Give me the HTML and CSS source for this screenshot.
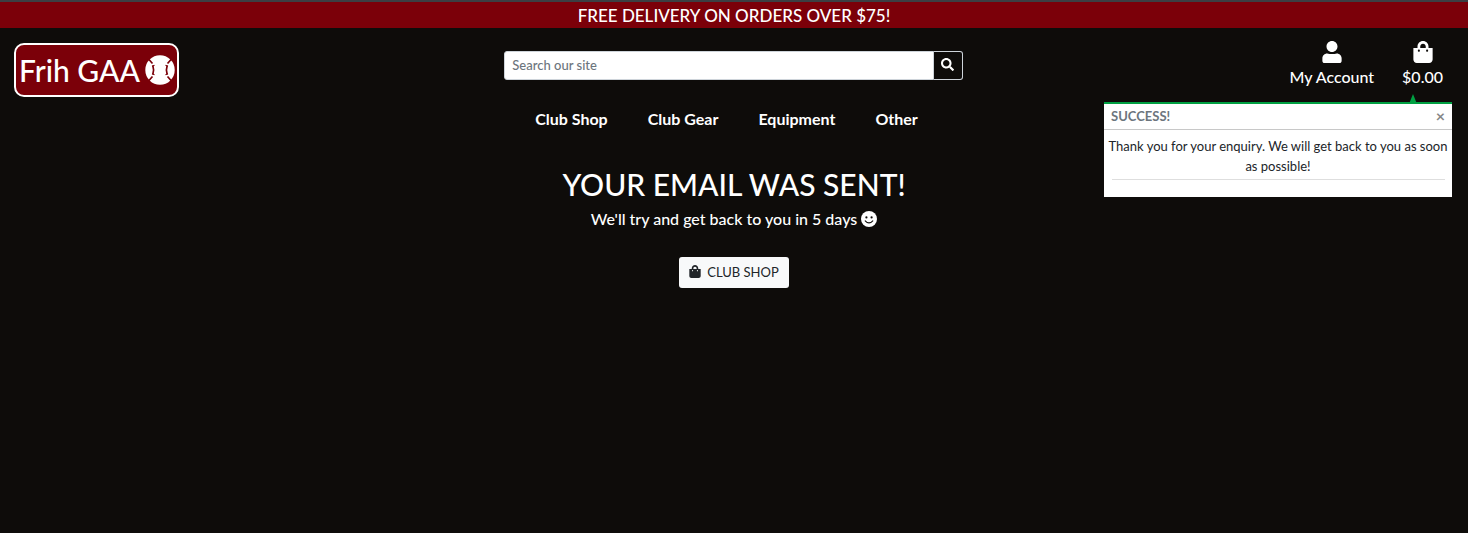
FILE: index.html
```html
<!DOCTYPE html>
<html lang="en">
<head>
<meta charset="utf-8">
<meta name="viewport" content="width=device-width, initial-scale=1">
<title>Frih GAA</title>
<link rel="stylesheet" href="styles.css">
</head>
<body>
<svg class="sprite" aria-hidden="true">
  <symbol id="bag" viewBox="0 0 448 512"><path d="M352 160v-32C352 57.42 294.579 0 224 0 153.42 0 96 57.42 96 128v32H0v272c0 44.183 35.817 80 80 80h288c44.183 0 80-35.817 80-80V160h-96zm-192-32c0-35.29 28.71-64 64-64s64 28.71 64 64v32H160v-32zm160 120c-13.255 0-24-10.745-24-24s10.745-24 24-24 24 10.745 24 24-10.745 24-24 24zm-192 0c-13.255 0-24-10.745-24-24s10.745-24 24-24 24 10.745 24 24-10.745 24-24 24z"/></symbol>
</svg>
<div class="banner">FREE DELIVERY ON ORDERS OVER $75!</div>
<header class="header">
  <div class="brand">
    <a class="logo" href="#">Frih GAA
      <svg class="ball" viewBox="0 0 30 30" aria-hidden="true">
        <circle cx="15" cy="15" r="14.7" fill="#fff"/>
        <g fill="none" stroke="#7b0009" stroke-width="1.700">
          <path d="M3.500 4L7.500 8.500M3.500 26L7.500 21.500M26.500 4L22.500 8.500M26.500 26L22.500 21.500"/>
          <path d="M7.800 10.500Q9.400 15 7.800 19.500M22.200 10.500Q20.600 15 22.200 19.500"/>
          <path d="M7 11.300L9.500 10.300M7 18.700L9.500 19.700M23 11.300L20.500 10.300M23 18.700L20.500 19.700" stroke-width="1.200"/>
        </g>
      </svg>
    </a>
  </div>
  <form class="search">
    <input class="search-input" type="text" placeholder="Search our site" aria-label="Search our site">
    <button class="search-button" type="button" aria-label="Search">
      <svg class="search-icon" viewBox="0 0 512 512" aria-hidden="true"><path d="M505 442.700L405.300 343c-4.500-4.500-10.600-7-17-7H372c27.600-35.300 44-79.700 44-128C416 93.100 322.900 0 208 0S0 93.100 0 208s93.100 208 208 208c48.300 0 92.700-16.400 128-44v16.300c0 6.400 2.500 12.500 7 17l99.700 99.700c9.400 9.400 24.600 9.400 33.900 0l28.300-28.300c9.400-9.400 9.400-24.600.1-34zM208 336c-70.700 0-128-57.200-128-128 0-70.700 57.200-128 128-128 70.700 0 128 57.200 128 128 0 70.700-57.200 128-128 128z"/></svg>
    </button>
  </form>
  <div class="account">
    <a class="account-link" href="#">
      <svg class="account-icon" viewBox="0 0 448 512" aria-hidden="true"><path d="M224 256c70.700 0 128-57.300 128-128S294.700 0 224 0 96 57.300 96 128s57.300 128 128 128zm112 32c-34 10-70 16-112 16s-78-6-112-16C50 288 0 338 0 400V464c0 26.500 21.500 48 48 48h352c26.500 0 48-21.500 48-48v-64c0-62-50-112-112-112z"/></svg>
      <span>My Account</span>
    </a>
    <a class="account-link" href="#">
      <svg class="account-icon" aria-hidden="true"><use href="#bag"/></svg>
      <span>$0.00</span>
    </a>
  </div>
  <section class="toast" role="status">
    <div class="toast-header">
      <strong>SUCCESS!</strong>
      <button class="toast-close" type="button" aria-label="Close">×</button>
    </div>
    <div class="toast-body">
      <p class="toast-text">Thank you for your enquiry. We will get back to you as soon as possible!</p>
      <hr class="toast-rule">
    </div>
  </section>
</header>
<nav class="nav">
  <a href="#">Club Shop</a>
  <a href="#">Club Gear</a>
  <a href="#">Equipment</a>
  <a href="#">Other</a>
</nav>
<main class="main">
  <h1 class="title">YOUR EMAIL WAS SENT!</h1>
  <p class="lead">We'll try and get back to you in 5 days
    <svg class="smile" viewBox="0 0 16 16" aria-hidden="true">
      <circle cx="8" cy="8" r="8" fill="#fff"/>
      <circle cx="5.400" cy="6.400" r="1.100" fill="#0e0c0a"/><circle cx="10.600" cy="6.400" r="1.100" fill="#0e0c0a"/>
      <path d="M4.200 9.800Q8 14 11.800 9.800" fill="none" stroke="#0e0c0a" stroke-width="1.100" stroke-linecap="round"/>
    </svg>
  </p>
  <a class="shop-button" href="#"><svg class="shop-icon" aria-hidden="true"><use href="#bag"/></svg>CLUB SHOP</a>
</main>
</body>
</html>
```
FILE: styles.css
```css
* { box-sizing: border-box; }
body {
  margin: 0;
  background: #0e0c0a;
  color: #fff;
  font-family: Lato, sans-serif;
  font-size: 16px;
  font-weight: 500;
  line-height: 24px;
}
a { color: inherit; text-decoration: none; }
svg { fill: currentColor; }
.sprite { display: none; }
.banner {
  padding-top: 2px;
  border-top: 2px solid #3c3f43;
  background: #7b0009;
  font-size: 17px;
  text-align: center;
}
.header {
  position: relative;
  display: grid;
  grid-template-columns: repeat(3, 1fr);
  align-items: start;
  padding-top: 12px;
}
.brand { padding: 3px 14px 0; }
.logo {
  display: inline-flex;
  align-items: center;
  gap: 5px;
  height: 54px;
  padding: 0 2px 0 3px;
  border: 2px solid #fff;
  border-radius: 10px;
  background: #7b0009;
  font-size: 30px;
  white-space: nowrap;
}
.ball { width: 30px; height: 30px; }
.search { display: flex; padding: 11px 16px 0 15px; }
.search-input {
  flex: 1;
  min-width: 0;
  height: 29px;
  padding: 0 7px 2px;
  border: 1px solid #ced4da;
  border-radius: 3px 0 0 3px;
  background: #fff;
  font: 500 13px/20px Lato, sans-serif;
}
.search-input::placeholder { color: #6c757d; }
.search-button {
  width: 29px;
  height: 29px;
  padding: 0 0 3px;
  border: 1px solid #ced4da;
  border-left: 0;
  border-radius: 0 3px 3px 0;
  background: #0e0c0a;
  color: #fff;
  line-height: 0;
}
.search-icon { width: 13px; height: 13px; }
.account {
  display: flex;
  justify-content: flex-end;
  gap: 28px;
  padding: 1px 25px 0 0;
}
.account-link { display: flex; flex-direction: column; align-items: center; gap: 2px; }
.account-icon { width: 20px; height: 22px; }
.toast {
  position: absolute;
  top: 74px;
  right: 16px;
  width: 348px;
  border-top: 2px solid #00a042;
  background: #fff;
  color: #212529;
  font-size: 13px;
  font-weight: 400;
  line-height: 20px;
}
.toast::before {
  content: "";
  position: absolute;
  right: 35px;
  bottom: 100%;
  border: 4px solid transparent;
  border-top: 0;
  border-bottom: 10px solid #00a042;
}
.toast-header {
  display: flex;
  justify-content: space-between;
  padding: 2px 7px 3px;
  border-bottom: 1px solid #c8c8c8;
  color: #6c757d;
}
.toast-close {
  padding: 0;
  border: 0;
  background: none;
  color: #868686;
  font: bold 16px/20px Lato, sans-serif;
}
.toast-body { padding: 6px 0 17px; }
.toast-text { margin: 0; padding: 0 2px; text-align: center; }
.toast-rule { margin: 3px 7px 0 8px; border: 0; border-top: 1px solid #dedede; }
.nav {
  display: flex;
  justify-content: center;
  gap: 40px;
  padding: 10px 15px 0 0;
  font-weight: 700;
}
.main { padding: 34px 15px 0; text-align: center; }
.title { margin: 0 0 4px; font-size: 30px; font-weight: 500; line-height: 38px; }
.lead { margin: 0 0 26px; }
.smile { width: 16px; height: 16px; vertical-align: -2px; }
.shop-button {
  display: inline-flex;
  align-items: center;
  gap: 6px;
  height: 31px;
  padding: 0 10px 2px;
  border-radius: 3px;
  background: #f8f9fa;
  color: #212529;
  font-size: 13px;
  font-weight: 400;
}
.shop-icon { width: 12px; height: 13px; }
```
